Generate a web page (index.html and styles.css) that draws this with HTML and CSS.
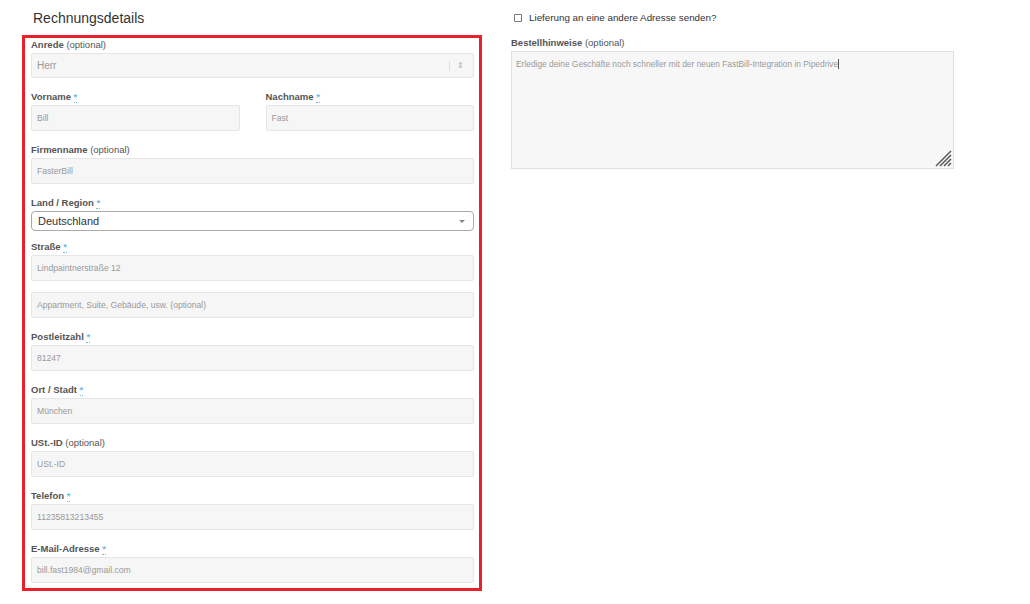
FILE: index.html
```html
<!DOCTYPE html>
<html lang="de">
<head>
<meta charset="utf-8">
<title>Rechnungsdetails</title>
<link rel="stylesheet" href="styles.css">
</head>
<body>
<div class="page">
  <div class="left">
    <h3 class="title">Rechnungsdetails</h3>
    <div class="box">
      <div class="field">
        <label class="lbl">Anrede <span class="opt">(optional)</span></label>
        <div class="sel-grey"><span>Herr</span><span class="sel-sep"></span><span class="updown">&#8661;</span></div>
      </div>
      <div class="row2">
        <div class="field">
          <label class="lbl">Vorname <abbr class="req">*</abbr></label>
          <div class="inp">Bill</div>
        </div>
        <div class="field">
          <label class="lbl">Nachname <abbr class="req">*</abbr></label>
          <div class="inp">Fast</div>
        </div>
      </div>
      <div class="field">
        <label class="lbl">Firmenname <span class="opt">(optional)</span></label>
        <div class="inp">FasterBill</div>
      </div>
      <div class="field field-tight">
        <label class="lbl">Land / Region <abbr class="req">*</abbr></label>
        <div class="sel-white"><span>Deutschland</span><span class="caret"></span></div>
      </div>
      <div class="field">
        <label class="lbl">Straße <abbr class="req">*</abbr></label>
        <div class="inp">Lindpaintnerstraße 12</div>
        <div class="inp inp-gap">Appartment, Suite, Gebäude, usw. (optional)</div>
      </div>
      <div class="field">
        <label class="lbl">Postleitzahl <abbr class="req">*</abbr></label>
        <div class="inp">81247</div>
      </div>
      <div class="field">
        <label class="lbl">Ort / Stadt <abbr class="req">*</abbr></label>
        <div class="inp">München</div>
      </div>
      <div class="field">
        <label class="lbl">USt.-ID <span class="opt">(optional)</span></label>
        <div class="inp">USt.-ID</div>
      </div>
      <div class="field">
        <label class="lbl">Telefon <abbr class="req">*</abbr></label>
        <div class="inp">11235813213455</div>
      </div>
      <div class="field last">
        <label class="lbl">E-Mail-Adresse <abbr class="req">*</abbr></label>
        <div class="inp">bill.fast1984@gmail.com</div>
      </div>
    </div>
  </div>
  <div class="right">
    <div class="ship"><span class="cb"></span><span>Lieferung an eine andere Adresse senden?</span></div>
    <label class="lbl">Bestellhinweise <span class="opt">(optional)</span></label>
    <div class="ta">
      <span class="ta-text">Erledige deine Geschäfte noch schneller mit der neuen FastBill-Integration in Pipedrive</span><span class="cursor"></span>
      <svg class="grip" width="18" height="18" viewBox="0 0 18 18"><g stroke="#555" stroke-width="1.4"><line x1="17" y1="2" x2="2" y2="17"/><line x1="17" y1="6" x2="6" y2="17"/><line x1="17" y1="10" x2="10" y2="17"/><line x1="17" y1="14" x2="14" y2="17"/></g></svg>
    </div>
  </div>
</div>
</body>
</html>
```
FILE: styles.css
```css
* { box-sizing: border-box; }
html, body { margin: 0; padding: 0; background: #fff; }
body { font-family: "Liberation Sans", Arial, sans-serif; color: #333; }
.page { display: flex; gap: 29px; padding-left: 22px; }
.left { width: 460px; }
.title { margin: 8px 0 7px 11px; font-size: 14px; line-height: 20px; font-weight: normal; color: #333; }
.box { border: 3px solid #e8202a; padding: 0 5px 5px 6px; }
.field { margin-bottom: 12px; }
.field.field-tight { margin-bottom: 9px; }
.field.last { margin-bottom: 0; }
.lbl { display: block; font-size: 9.5px; line-height: 13px; font-weight: bold; color: #555; margin-bottom: 2px; }
.opt { font-weight: normal; }
.req { color: #6bbbe3; text-decoration: none; border-bottom: 1px dotted #6bbbe3; font-weight: bold; }
.inp { height: 26px; background: #f6f6f6; border: 1px solid #e6e6e6; border-radius: 2px; font-size: 8.6px; color: #999; padding: 0 5px; display: flex; align-items: center; }
.inp-gap { margin-top: 11px; }
.row2 { display: grid; grid-template-columns: 1fr 1fr; gap: 26px; }
.sel-grey { height: 25px; background: #f6f6f6; border: 1px solid #e6e6e6; border-radius: 2px; font-size: 10px; color: #999; padding: 0 5px; display: flex; align-items: center; }
.sel-grey span:first-child { flex: 1; }
.sel-sep { width: 1px; height: 10px; background: #ddd; margin-right: 7px; }
.updown { font-size: 8px; color: #aaa; margin-right: 4px; }
.sel-white { height: 20px; background: #fff; border: 1px solid #aaa; border-radius: 4px; font-size: 11px; color: #333; padding: 0 8px 0 6px; display: flex; align-items: center; margin-top: 1px; }
.sel-white span:first-child { flex: 1; }
.caret { width: 0; height: 0; border-left: 3px solid transparent; border-right: 3px solid transparent; border-top: 3px solid #888; }
.right { width: 443px; padding-top: 12px; }
.ship { display: flex; align-items: center; font-size: 9.8px; color: #333; margin-left: 3px; margin-bottom: 13px; }
.cb { width: 8px; height: 8px; border: 1px solid #767676; border-radius: 1px; margin-right: 7px; background: #fff; }
.ta { position: relative; height: 118px; background: #f7f7f7; border: 1px solid #e0e0e0; padding: 7px 4px; font-size: 8.4px; color: #999; }
.cursor { display: inline-block; width: 1px; height: 10px; background: #555; vertical-align: -2px; }
.grip { position: absolute; right: 1px; bottom: 1px; }
```
